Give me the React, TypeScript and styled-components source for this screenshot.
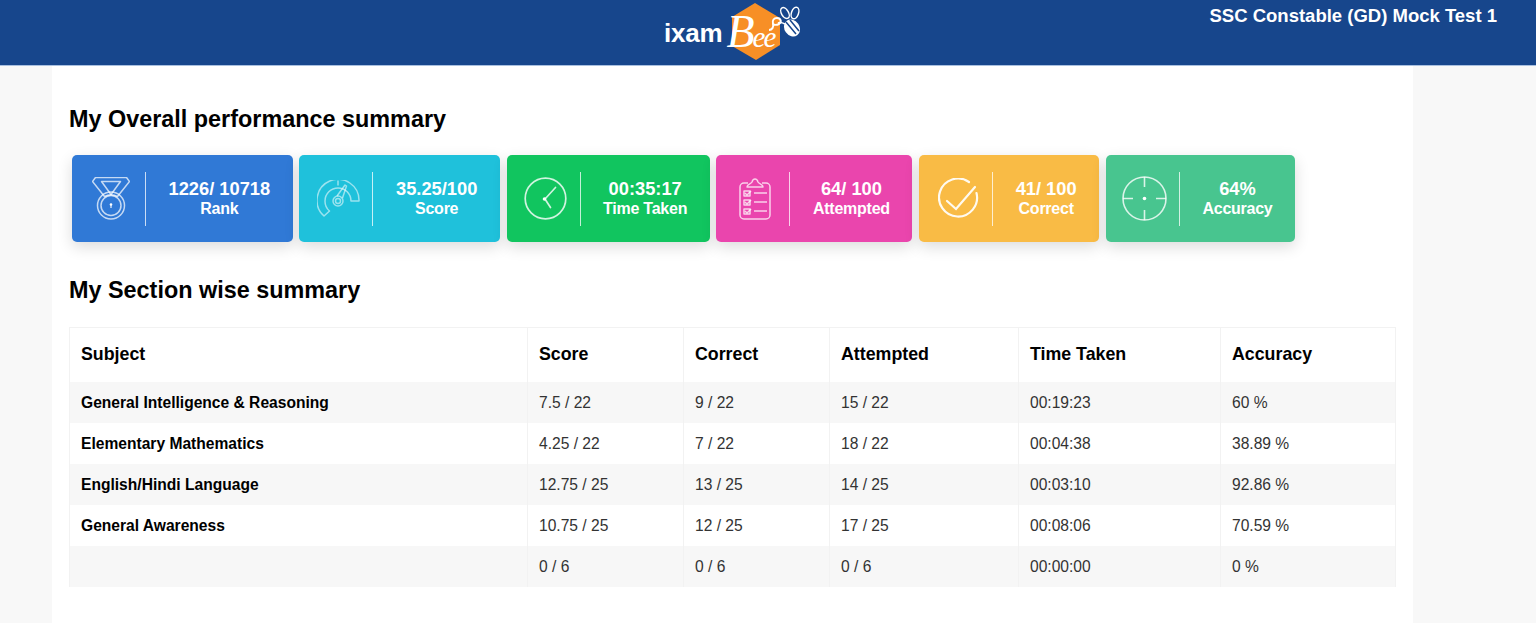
import React from 'react';
import styled, { createGlobalStyle } from 'styled-components';

const GlobalStyle = createGlobalStyle`
  html, body {
    margin: 0;
    padding: 0;
    background: #f8f8f8;
    font-family: "Liberation Sans", Arial, sans-serif;
    color: #000;
    overflow: hidden;
  }
`;

const Header = styled.header`
  height: 65px;
  background: #17468c;
  display: grid;
  grid-template-columns: 664px 136px 1fr;
  border-bottom: 1px solid #a9c0e0;
`;

const Logo = styled.div`
  position: relative;
  grid-column: 2;
  display: flex;
  align-items: center;
  width: 136px;
  height: 65px;
`;

const LogoArt = styled.svg`
  position: absolute;
  left: 0;
  top: 0;
`;

const LogoWord = styled.span`
  position: relative;
  margin-top: 2px;
  font-size: 26px;
  font-weight: 700;
  color: #fff;
  letter-spacing: -0.2px;
`;

const LogoScript = styled.span`
  position: relative;
  display: inline-block;
  margin-top: -3px;
  margin-left: 4px;
  font-family: "Liberation Serif", serif;
  font-style: italic;
  font-size: 29px;
  color: #fff;
  letter-spacing: -2px;

  &::first-letter {
    font-size: 46px;
  }
`;

const TestName = styled.div`
  grid-column: 3;
  justify-self: end;
  padding: 6px 39px 0 0;
  font-size: 18.5px;
  font-weight: 700;
  line-height: 20px;
  color: #fff;
`;

const Sheet = styled.main`
  width: 1327px;
  height: 558px;
  margin-left: 52px;
  padding: 0 17px;
  background: #fff;
`;

const Heading = styled.h2<{ $top: number }>`
  margin: 0;
  padding-top: ${p => p.$top}px;
  font-size: 23.4px;
  line-height: 28px;
  font-weight: 700;
`;

const CardRow = styled.div`
  display: flex;
  gap: 6.8px;
  margin: 22px 0 34px 3px;
`;

const Card = styled.div<{ $bg: string }>`
  display: flex;
  align-items: center;
  height: 87px;
  border-radius: 5px;
  background: ${p => p.$bg};
  box-shadow: 0 5px 15px rgba(0, 0, 0, 0.14);
  color: #fff;
`;

const IconBox = styled.div`
  width: 74px;
  height: 54px;
  box-sizing: border-box;
  padding-left: 5px;
  display: flex;
  align-items: center;
  justify-content: center;
  border-right: 1px solid rgba(255, 255, 255, 0.75);
`;

const CardText = styled.div`
  padding: 0 22.5px;
  text-align: center;
  font-weight: 700;
`;

const CardValue = styled.div`
  font-size: 18.3px;
  line-height: 20px;
`;

const CardLabel = styled.div`
  font-size: 16px;
  line-height: 20px;
  letter-spacing: -0.25px;
`;

const Table = styled.table`
  width: 1326px;
  margin-top: 23px;
  border-collapse: collapse;
  table-layout: fixed;
`;

const Th = styled.th`
  height: 54px;
  padding: 0 11px;
  box-sizing: border-box;
  border: 1px solid #f2f2f2;
  border-bottom: none;
  text-align: left;
  font-size: 17.8px;
  font-weight: 700;
`;

const Row = styled.tr`
  &:nth-child(odd) {
    background: #f7f7f7;
  }
`;

const Td = styled.td`
  height: 41px;
  padding: 2px 11px 0;
  box-sizing: border-box;
  border-left: 1px solid #f2f2f2;
  border-right: 1px solid #f2f2f2;
  font-size: 15.6px;
  color: #333;
`;

const SubjectCell = styled(Td)`
  font-weight: 700;
  color: #000;
`;

const MedalIcon = () => (
  <svg width="38" height="43" viewBox="-0.5 -0.5 38 43" fill="none" stroke="#fff" strokeOpacity="0.72" strokeWidth="1.5" strokeLinejoin="round">
    <path d="M3 0h31l3 4-12 15a14 14 0 0 0-13 0L0 4z" />
    <path d="M9 4h19l-9.500 13z" />
    <circle cx="18.500" cy="28" r="13.500" />
    <circle cx="18.500" cy="28" r="10" />
    <circle cx="18.500" cy="27" r="1.300" fill="#fff" stroke="none" />
    <path d="M18.500 27.500v3" />
  </svg>
);

const GaugeIcon = () => (
  <svg width="43" height="37" viewBox="0 0 43 37" fill="none" stroke="#fff" strokeOpacity="0.55" strokeWidth="1.500" strokeLinejoin="round">
    <path d="M7 36A21 21 0 1 1 42 21H34A13 13 0 0 0 8 21 13 13 0 0 0 12.500 31Z" />
    <circle cx="21" cy="21" r="5" />
    <circle cx="21" cy="21" r="2.500" />
    <path d="M21 0.500v5M20 16l8-11 1.500 1-4 12" />
  </svg>
);

const ClockIcon = () => (
  <svg width="43" height="43" viewBox="0 0 43 43" fill="none" stroke="#fff" strokeOpacity="0.8" strokeWidth="1.700" strokeLinecap="round">
    <circle cx="21.500" cy="21.500" r="20.300" />
    <path d="M31.500 10.500L21 22l5.500 8.500" />
    <circle cx="20.500" cy="22" r="1.800" fill="#fff" stroke="none" />
  </svg>
);

const ClipboardIcon = () => (
  <svg width="32" height="42" viewBox="0 0 32 42" fill="none" stroke="#fff" strokeOpacity="0.75" strokeWidth="1.500" strokeLinejoin="round">
    <path d="M9 5H5a4 4 0 0 0-4 4v28a4 4 0 0 0 4 4h22a4 4 0 0 0 4-4V9a4 4 0 0 0-4-4h-4" />
    <path d="M8 9c0-3 4-3 5-5 1-4 5-4 6 0 1 2 5 2 5 5z" />
    <path d="M5 13h6v5H5zM5 22h6v5H5zM5 31h6v5H5z" />
    <path d="M15 15h13M15 24h13M15 33h13" />
    <path d="M6 15l2 2 4-4M6 24l2 2 4-4M6 33l2 2 4-4" />
  </svg>
);

const CheckIcon = () => (
  <svg width="41" height="41" viewBox="0 0 41 41" fill="none" stroke="#fff" strokeWidth="2.200" strokeOpacity="0.92" strokeLinecap="round">
    <path d="M31 4A19 19 0 1 0 38.500 15" />
    <path d="M9 23l9 8L37 9" />
  </svg>
);

const TargetIcon = () => (
  <svg width="45" height="45" viewBox="0 0 45 45" fill="none" stroke="#fff" strokeOpacity="0.8" strokeWidth="1.600">
    <circle cx="22.500" cy="22.500" r="21.500" />
    <path d="M22.500 1v10M22.500 34v10M1 22.500h10M34 22.500h10" />
    <circle cx="22.500" cy="22.500" r="1.800" fill="#fff" stroke="none" />
  </svg>
);

const cards = [
  { bg: '#3079d6', value: '1226/ 10718', label: 'Rank', icon: <MedalIcon /> },
  { bg: '#1fc1db', value: '35.25/100', label: 'Score', icon: <GaugeIcon /> },
  { bg: '#11c55f', value: '00:35:17', label: 'Time Taken', icon: <ClockIcon /> },
  { bg: '#ea45ad', value: '64/ 100', label: 'Attempted', icon: <ClipboardIcon /> },
  { bg: '#f9bb45', value: '41/ 100', label: 'Correct', icon: <CheckIcon /> },
  { bg: '#48c58f', value: '64%', label: 'Accuracy', icon: <TargetIcon /> },
];

const columns = [
  { name: 'Subject', width: 458 },
  { name: 'Score', width: 156 },
  { name: 'Correct', width: 146 },
  { name: 'Attempted', width: 189 },
  { name: 'Time Taken', width: 202 },
  { name: 'Accuracy', width: 175 },
];

const rows = [
  ['General Intelligence & Reasoning', '7.5 / 22', '9 / 22', '15 / 22', '00:19:23', '60 %'],
  ['Elementary Mathematics', '4.25 / 22', '7 / 22', '18 / 22', '00:04:38', '38.89 %'],
  ['English/Hindi Language', '12.75 / 25', '13 / 25', '14 / 25', '00:03:10', '92.86 %'],
  ['General Awareness', '10.75 / 25', '12 / 25', '17 / 25', '00:08:06', '70.59 %'],
  ['', '0 / 6', '0 / 6', '0 / 6', '00:00:00', '0 %'],
];

export default function App() {
  return (
    <>
      <GlobalStyle />
      <Header>
        <Logo>
          <LogoArt width="136" height="65" viewBox="0 0 136 65" fill="none">
            <path d="M91 3l25 15v27L92 60 68 46V17z" fill="#f78f26" />
            <path d="M105 30c3 0 5-3 4-6-1-4 1-6 4-6 4 0 5 4 2 6-2 1-5 1-6 0" stroke="#fff" strokeWidth="2" />
            <path d="M114 23c2-1 5 0 7 1" stroke="#fff" strokeWidth="1.500" />
            <ellipse cx="128" cy="28" rx="7.500" ry="9" fill="#fff" transform="rotate(-35 128 28)" />
            <path d="M122 22l10 12M126 20l9 11" stroke="#17468c" strokeWidth="1.500" />
            <ellipse cx="121" cy="13" rx="3.500" ry="6" stroke="#fff" strokeWidth="1.500" transform="rotate(-30 121 13)" />
            <ellipse cx="131" cy="13" rx="3.500" ry="6" stroke="#fff" strokeWidth="1.500" transform="rotate(20 131 13)" />
          </LogoArt>
          <LogoWord>ixam</LogoWord>
          <LogoScript>Bee</LogoScript>
        </Logo>
        <TestName>SSC Constable (GD) Mock Test 1</TestName>
      </Header>
      <Sheet>
        <Heading $top={39}>My Overall performance summary</Heading>
        <CardRow>
          {cards.map(c => (
            <Card key={c.label} $bg={c.bg}>
              <IconBox>{c.icon}</IconBox>
              <CardText>
                <CardValue>{c.value}</CardValue>
                <CardLabel>{c.label}</CardLabel>
              </CardText>
            </Card>
          ))}
        </CardRow>
        <Heading $top={0}>My Section wise summary</Heading>
        <Table>
          <colgroup>
            {columns.map(c => (
              <col key={c.name} width={c.width} />
            ))}
          </colgroup>
          <thead>
            <tr>
              {columns.map(c => (
                <Th key={c.name}>{c.name}</Th>
              ))}
            </tr>
          </thead>
          <tbody>
            {rows.map((r, i) => (
              <Row key={i}>
                <SubjectCell>{r[0]}</SubjectCell>
                {r.slice(1).map((v, j) => (
                  <Td key={j}>{v}</Td>
                ))}
              </Row>
            ))}
          </tbody>
        </Table>
      </Sheet>
    </>
  );
}
